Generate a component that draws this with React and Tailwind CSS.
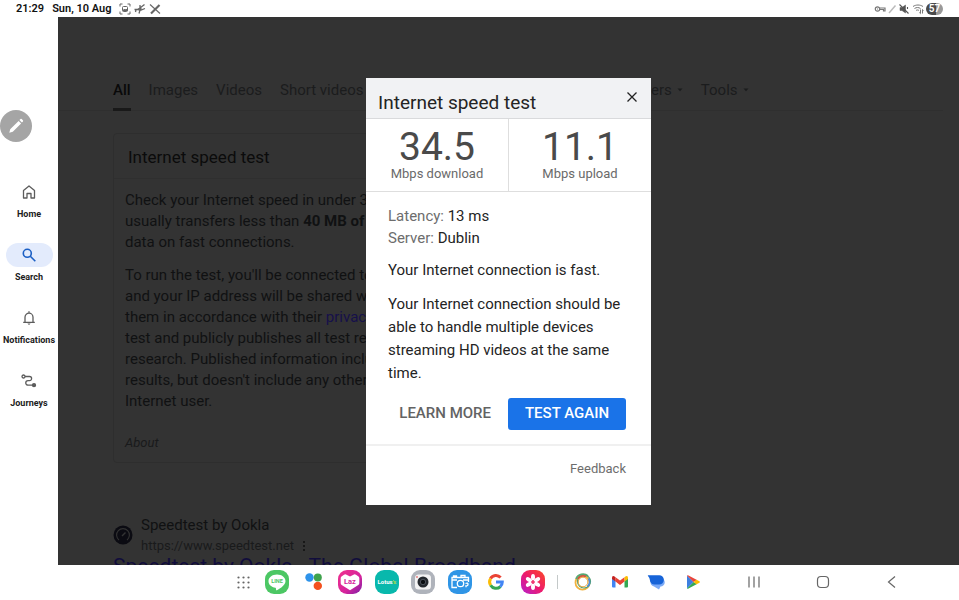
import React from "react";

const tabs = ["Images", "Videos", "Short videos", "Forums", "News", "Web", "Books"];

function Caret() {
  return (
    <svg viewBox="0 0 6 4" className="h-1 w-1.5" fill="currentColor">
      <path d="M0.5 0.5h5L3 3.2z" />
    </svg>
  );
}

function StatusBar() {
  return (
    <header className="flex h-[17px] shrink-0 items-center justify-between pr-4 pl-4 text-[11px] leading-4 font-semibold text-[#111]">
      <div className="flex items-center gap-2">
        <span>21:29</span>
        <span>Sun, 10 Aug</span>
        <div className="flex items-center gap-[3px] text-[#666]">
          <svg viewBox="0 0 12 12" className="h-3 w-3" fill="none" stroke="currentColor">
            <path d="M1 3.5V1h2.5M8.500 1H11v2.500M11 8.500V11H8.500M3.500 11H1V8.500" />
            <rect x="3.500" y="3.500" width="5" height="5" rx="1" />
            <path d="M4 7.500l1.500-1.500 1 1 1-1 1 1.500z" fill="currentColor" />
          </svg>
          <svg viewBox="0 0 12 12" className="h-3 w-3" fill="none" stroke="currentColor" strokeWidth="1.300">
            <path d="M0.500 6.500h3L6 5l4.500-3.500M3.500 6.500L7 7l4-1.500M6 5V2M6 7l-1 3.500M2 6.500l-.5 2.500" />
            <circle cx="6.500" cy="6" r="1.200" fill="currentColor" stroke="none" />
          </svg>
          <svg viewBox="0 0 12 12" className="h-3 w-3" fill="none" stroke="currentColor">
            <path d="M2 10.500L10.500 2" strokeWidth="2.200" />
            <path d="M1 1.500L11 10.500" strokeWidth="1.100" />
          </svg>
        </div>
      </div>
      <div className="flex items-center text-[#777]">
        <svg viewBox="0 0 12 12" className="h-3 w-3" fill="none" stroke="currentColor" strokeWidth="1.200">
          <circle cx="3.500" cy="6" r="2.200" />
          <path d="M5.500 5h5.500v3H9.500V6.500H5.500M3 6h1" />
        </svg>
        <svg viewBox="0 0 12 12" className="h-3 w-3" fill="none" stroke="#bbb" strokeWidth="1.500">
          <path d="M3 10L9.500 2.500" />
        </svg>
        <svg viewBox="0 0 12 12" className="h-3 w-3" fill="#555" stroke="#555">
          <path d="M2 4.500h2L7.500 2v8L4 7.500H2z" strokeWidth=".5" />
          <path d="M1.500 1.500l9 9M9.500 4v2" strokeWidth="1.100" fill="none" />
        </svg>
        <svg viewBox="0 0 12 12" className="ml-0.5 h-3 w-3" fill="none" stroke="currentColor">
          <path d="M1 3.500c3-2 7-2 10 0M2.500 5.500c2-1.300 4-1.300 6 0M4 7.500c1-.7 2-.7 3 0" />
          <path d="M8.500 10.500V6.500M7.300 9.500l1.200 1.200M10.500 6.500v4M10.500 6.500l1 1" />
        </svg>
        <span className="ml-0.5 w-[17px] rounded-full bg-linear-to-r from-[#4a4a4a] from-60% to-[#999] to-60% text-center text-[10px] leading-3 text-white">
          57
        </span>
      </div>
    </header>
  );
}

function NavItem({ label, active, children }) {
  return (
    <a href="#" className="flex flex-col items-center gap-0.5 text-[9px] leading-4 font-bold text-[#1c1c1c]">
      <span className={`flex h-6 w-[47px] items-center justify-center rounded-full ${active ? "bg-[#e3ebfc] text-[#1b5fc4]" : "text-[#5c5c5c]"}`}>
        {children}
      </span>
      {label}
    </a>
  );
}

function Sidebar() {
  return (
    <aside className="flex w-[58px] shrink-0 flex-col bg-white pt-[93px]">
      <button aria-label="Edit" className="flex h-8 w-8 items-center justify-center rounded-full bg-[#a5a5a5]">
        <svg viewBox="0 0 18 18" className="h-[18px] w-[18px]" fill="#fff">
          <path d="M2.300 15.700l.9-3.500L11.600 3.900l2.500 2.500-8.300 8.400zM12.400 3.100l1.100-1.100q.6-.4 1.200.1l1.200 1.200q.5.600.1 1.200l-1.100 1.100z" />
        </svg>
      </button>
      <nav className="flex flex-col gap-[21px] pt-[38px]">
        <NavItem label="Home">
          <svg viewBox="0 0 14 14" className="h-3.5 w-3.5" fill="none" stroke="currentColor" strokeWidth="1.300">
            <path d="M1.500 5.500L7 1l5.500 4.500v7.500H9V8.500H5V13H1.500z" strokeLinejoin="round" />
          </svg>
        </NavItem>
        <NavItem label="Search" active>
          <svg viewBox="0 0 14 14" className="h-3.5 w-3.5" fill="none" stroke="currentColor" strokeWidth="1.600">
            <circle cx="5.300" cy="5.300" r="4" />
            <path d="M8.300 8.300l5 5" />
          </svg>
        </NavItem>
        <NavItem label="Notifications">
          <svg viewBox="0 0 14 14" className="h-3.5 w-3.5" fill="none" stroke="currentColor" strokeWidth="1.300">
            <path d="M1.200 11.300h11.600M3 11V6.200a4 4 0 018 0V11M7 2.400V.3" />
            <path d="M5.400 12.400h3.200L7 14z" fill="currentColor" stroke="none" />
          </svg>
        </NavItem>
        <NavItem label="Journeys">
          <svg viewBox="0 0 16 14" className="h-3.5 w-4" fill="none" stroke="currentColor" strokeWidth="1.300">
            <circle cx="2.500" cy="2.500" r="1.500" />
            <path d="M4 2.500h4.500a2.100 2.100 0 010 4.200H7a2.250 2.250 0 000 4.500h5" />
            <circle cx="13" cy="11.200" r="1.500" fill="currentColor" />
          </svg>
        </NavItem>
      </nav>
    </aside>
  );
}

function Results() {
  return (
    <div className="pt-16 text-[#101112]">
      <nav className="mr-4 flex h-[30px] items-start gap-[18px] border-b border-[#2f2f2f] pl-[55px] text-[15px] leading-[18px] whitespace-nowrap text-[#1b1c1d]">
        <a href="#" className="h-[30px] border-b-3 border-[#191919] font-medium text-[#090909]">All</a>
        {tabs.map((t) => (
          <a href="#" key={t}>{t}</a>
        ))}
        <button className="flex items-center gap-[5px]">All filters <Caret /></button>
        <button className="flex items-center gap-[5px]">Tools <Caret /></button>
      </nav>
      <section className="mt-[22px] ml-[55px] w-[470px] rounded-sm border border-[#2e2e2e] whitespace-nowrap">
        <h2 className="border-b border-[#2f2f2f] px-3.5 pt-3 pb-2.5 text-[17px] leading-[22px] text-[#0b0b0b]">Internet speed test</h2>
        <div className="flex flex-col gap-3 px-[11px] pt-[11px] text-[15px] leading-[21px]">
          <p>
            Check your Internet speed in under 30 seconds. The speed test<br />
            usually transfers less than <b>40 MB of data</b>, but may transfer more<br />
            data on fast connections.
          </p>
          <p>
            To run the test, you'll be connected to Measurement Lab<br />
            and your IP address will be shared with them and used by<br />
            them in accordance with their <a href="#" className="text-[#16104a]">privacy policy</a>. M-Lab runs the<br />
            test and publicly publishes all test results to promote<br />
            research. Published information includes your IP and<br />
            results, but doesn't include any other details about an<br />
            Internet user.
          </p>
        </div>
        <p className="px-[11px] pt-[22px] pb-2.5 text-[13px] leading-[18px] text-[#191a1b] italic">About</p>
      </section>
      <section className="mt-[52px] pl-[55px]">
        <div className="flex items-center gap-2">
          <svg viewBox="0 0 20 20" className="h-5 w-5">
            <circle cx="10" cy="10" r="9.500" fill="#0b0b12" />
            <path d="M6 15a6.400 6.400 0 118 0" fill="none" stroke="#333" strokeWidth="1.100" />
            <path d="M9 11l3.500-3.500" stroke="#333" strokeWidth="1.400" />
          </svg>
          <div>
            <p className="text-[15px] leading-[21px]">Speedtest by Ookla</p>
            <p className="flex items-center gap-2 text-[13px] leading-[19px] text-[#191a1b]">
              https://www.speedtest.net
              <svg viewBox="0 0 4 12" className="h-3 w-1" fill="#111">
                <circle cx="2" cy="2" r="1" />
                <circle cx="2" cy="6" r="1" />
                <circle cx="2" cy="10" r="1" />
              </svg>
            </p>
          </div>
        </div>
        <a href="#" className="block text-[21px] leading-[22px] text-[#110d3c]">Speedtest by Ookla - The Global Broadband</a>
      </section>
    </div>
  );
}

function Figure({ value, unit }) {
  return (
    <div className="flex-1 pt-2.5 pb-[9px] text-center">
      <div className="text-[39px] leading-[37px] text-[#4a4a4a]">{value}</div>
      <div className="text-[13px] leading-4 text-[#6a6a6a]">{unit}</div>
    </div>
  );
}

function SpeedDialog() {
  return (
    <div role="dialog" aria-labelledby="speed-title" className="w-[285px] bg-white text-[15px] text-[#242424]">
      <div className="flex items-start justify-between border-b border-[#d9dadc] bg-[#f1f2f4] pt-[13px] pr-3.5 pb-[3px] pl-3">
        <h1 id="speed-title" className="text-[19px] leading-6">Internet speed test</h1>
        <button aria-label="Close" className="pt-px">
          <svg viewBox="0 0 10 10" className="h-2.5 w-2.5" fill="none" stroke="#222" strokeWidth="1.300">
            <path d="M.5.5l9 9M9.500.5l-9 9" />
          </svg>
        </button>
      </div>
      <div className="flex divide-x divide-[#dedede] border-b border-[#dedede]">
        <Figure value="34.5" unit="Mbps download" />
        <Figure value="11.1" unit="Mbps upload" />
      </div>
      <div className="px-[22px] pt-[13px] leading-[22px]">
        <p><span className="text-[#6d6d6d]">Latency:</span> 13 ms</p>
        <p><span className="text-[#6d6d6d]">Server:</span> Dublin</p>
        <p className="pt-2.5">Your Internet connection is fast.</p>
        <p className="pt-3 leading-[23px]">
          Your Internet connection should be able to handle multiple devices streaming HD videos at the same time.
        </p>
      </div>
      <div className="flex justify-end gap-[17px] border-b-2 border-[#f0f0f0] pt-[13px] pr-[25px] pb-3.5 font-medium">
        <button className="text-[#636363]">LEARN MORE</button>
        <button className="h-8 w-[118px] rounded-[3px] bg-[#1a73e8] text-white">TEST AGAIN</button>
      </div>
      <div className="pt-3.5 pr-[25px] pb-[27px] text-right text-[13px] leading-[18px] text-[#6d6d6d]">
        <a href="#">Feedback</a>
      </div>
    </div>
  );
}

function AppIcons() {
  return (
    <div className="ml-[15px] flex w-[280px] items-center justify-between">
      <svg viewBox="0 0 24 24" className="h-6 w-6">
        <rect width="24" height="24" rx="9" fill="#4cc764" />
        <path d="M12 4.500c-4.800 0-8.500 2.900-8.500 6.700 0 3.300 2.900 6 7 6.600.8.200.4 2.200.7 2.500 1 .2 9.300-4.700 9.300-9.100 0-3.800-3.700-6.700-8.500-6.700z" fill="#fff" />
        <text x="12" y="13.300" textAnchor="middle" fontSize="5.500" fontWeight="700" fill="#4cc764">LINE</text>
      </svg>
      <svg viewBox="0 0 24 24" className="h-6 w-6">
        <circle cx="7.500" cy="7.500" r="4.200" fill="#2e93ea" />
        <circle cx="15.800" cy="7.500" r="4" fill="#3fa34d" />
        <circle cx="15.800" cy="15.900" r="4.200" fill="#f4511e" />
      </svg>
      <svg viewBox="0 0 24 24" className="h-6 w-6">
        <defs>
          <linearGradient id="laz" x1="0" y1="0" x2="1" y2="1">
            <stop offset="0" stopColor="#f0308c" />
            <stop offset=".6" stopColor="#d6249c" />
            <stop offset="1" stopColor="#7a1fa8" />
          </linearGradient>
        </defs>
        <rect width="24" height="24" rx="9" fill="url(#laz)" />
        <path d="M12 6.500L16 4.500q1-.4 2 .3l2.500 1.700q.8.700.8 1.700v5q0 1.200-1 1.800L12 20.300 3.700 15q-1-.6-1-1.800v-5q0-1 .8-1.700L6 4.800q1-.7 2-.3z" fill="#fff" />
        <text x="12" y="14" textAnchor="middle" fontSize="7.500" fontWeight="700" fill="#d6249c">Laz</text>
      </svg>
      <svg viewBox="0 0 24 24" className="h-6 w-6">
        <rect width="24" height="24" rx="9" fill="#08b8ac" />
        <text x="12" y="14" textAnchor="middle" fontSize="6" fontWeight="700" fill="#fff">Lotus<tspan fill="#b4dc3c">'s</tspan></text>
      </svg>
      <svg viewBox="0 0 24 24" className="h-6 w-6">
        <rect width="24" height="24" rx="9" fill="#afb3bb" />
        <rect x="4" y="4.500" width="16" height="15" rx="3.500" fill="#f3f3f4" />
        <circle cx="12" cy="12" r="5.500" fill="#24282e" />
        <circle cx="12" cy="12" r="2.700" fill="#0b0e12" stroke="#596069" strokeWidth=".8" />
        <circle cx="6" cy="7" r=".8" fill="#d33" />
      </svg>
      <svg viewBox="0 0 24 24" className="h-6 w-6">
        <rect width="24" height="24" rx="9" fill="#2f95e6" />
        <g fill="none" stroke="#fff" strokeWidth="1.300">
          <path d="M20.500 12V7.500H4v10h5M4 10h5M15 10h5.500M5.500 7.500V6h3v1.500M13 7V5.500h4V7" />
          <circle cx="12.500" cy="13.500" r="3.200" fill="#2f95e6" />
          <path d="M17.500 13.500q2.500-1 2.500.7t-2 1.600v1.500" />
        </g>
      </svg>
      <svg viewBox="0 0 24 24" className="h-6 w-6" fill="none" strokeWidth="3">
        <path d="M6.500 8.600A6.300 6.300 0 0116.600 7.500" stroke="#ea4335" />
        <path d="M6.600 15.300a6.300 6.300 0 010-6.700" stroke="#fbbc05" />
        <path d="M16.400 16.600a6.300 6.300 0 01-9.800-1.400" stroke="#34a853" />
        <path d="M12 12h6.300a6.300 6.300 0 01-2.100 4.700" stroke="#4285f4" />
      </svg>
      <svg viewBox="0 0 24 24" className="h-6 w-6">
        <defs>
          <linearGradient id="gallery" x1="0" y1="1" x2="1" y2="0">
            <stop offset="0" stopColor="#b41fd0" />
            <stop offset=".5" stopColor="#ee1c6c" />
            <stop offset="1" stopColor="#fb4a25" />
          </linearGradient>
        </defs>
        <rect width="24" height="24" rx="9" fill="url(#gallery)" />
        <g fill="#fff">
          {[0, 60, 120, 180, 240, 300].map((a) => (
            <ellipse key={a} cx="12" cy="7.300" rx="2" ry="3.300" transform={`rotate(${a} 12 12)`} />
          ))}
        </g>
        <circle cx="12" cy="12" r="1.600" fill="#ee3c70" />
      </svg>
    </div>
  );
}

function Taskbar() {
  return (
    <footer className="flex h-[35px] shrink-0 items-center bg-white pb-px pl-[237px]">
      <button aria-label="All apps">
        <svg viewBox="0 0 13 13" className="h-[13px] w-[13px]" fill="#666">
          {[1.5, 6.5, 11.5].map((y) => [1.5, 6.5, 11.5].map((x) => <circle key={`${x}-${y}`} cx={x} cy={y} r="1.100" />))}
        </svg>
      </button>
      <AppIcons />
      <div className="ml-3 h-3.5 w-px bg-[#c4c9c9]" />
      <div className="ml-[15px] flex w-[130px] items-center justify-between">
        <svg viewBox="0 0 20 20" className="h-5 w-5" fill="none" strokeWidth="1.800">
          <circle cx="9.500" cy="10.700" r="7" stroke="#f0b23e" />
          <path d="M3 7a7.500 7.500 0 0112-3" stroke="#5aaa74" />
          <circle cx="11" cy="9.500" r="6.500" stroke="#4e9f70" strokeWidth="1.200" />
          <path d="M5 7a6 6 0 018-2.500" stroke="#d9533f" />
          <path d="M15.500 6.500a6.200 6.200 0 01-1 8" stroke="#4b8ae0" />
          <circle cx="10" cy="10" r="4.800" stroke="#e9a640" strokeWidth="1" />
        </svg>
        <svg viewBox="0 0 20 20" className="h-5 w-5">
          <path d="M2 6v8.500q0 1 1 1h2.500V8.500z" fill="#4285f4" />
          <path d="M18 6v8.500q0 1-1 1h-2.500V8.500z" fill="#34a853" />
          <path d="M5.500 5.200L10 8.600l4.500-3.400v4.400L10 13 5.500 9.600z" fill="#ea4335" />
          <path d="M14.500 5.200Q18 2.700 18 6v1l-3.500 2.600z" fill="#fbbc04" />
          <path d="M5.500 5.200Q2 2.700 2 6v1l3.500 2.600z" fill="#c5221f" />
        </svg>
        <svg viewBox="0 0 20 20" className="h-5 w-5">
          <path d="M9 6h5.500a4.200 4.200 0 010 8.500L13 17.500 8 14.500a4.300 4.300 0 011-8.500z" fill="#7baaf7" />
          <path d="M1.800 3.200h11.400a4.600 4.600 0 010 9.300H8.500a4.600 4.600 0 01-4.600-4.600Q3.800 6 2 4z" fill="#1764d8" />
        </svg>
        <svg viewBox="0 0 20 20" className="h-5 w-5">
          <path d="M4 3.500L10.500 10 4 16.500z" fill="#3d7fe0" />
          <path d="M4 3.500Q4.700 3 5.500 3.500L14 8l-3.500 2z" fill="#e8453c" />
          <path d="M4 16.500Q4.700 17 5.500 16.500L14 12l-3.500-2z" fill="#34a853" />
          <path d="M13.500 7.700l3 1.600q.8.700 0 1.400l-3 1.600L10.500 10z" fill="#fbbc04" />
        </svg>
      </div>
      <div className="ml-[44px] flex w-[152px] items-center justify-between text-[#666]">
        <button aria-label="Recent apps">
          <svg viewBox="0 0 14 14" className="h-3.5 w-3.5" stroke="currentColor" strokeWidth="1.200">
            <path d="M2 1.500v11M7 1.500v11M12 1.500v11" />
          </svg>
        </button>
        <button aria-label="Home">
          <svg viewBox="0 0 14 14" className="h-3.5 w-3.5" fill="none" stroke="currentColor" strokeWidth="1.200">
            <rect x="1.500" y="1.500" width="11" height="11" rx="3.500" />
          </svg>
        </button>
        <button aria-label="Back">
          <svg viewBox="0 0 14 14" className="h-3.5 w-3.5" fill="none" stroke="currentColor" strokeWidth="1.200">
            <path d="M10 1.500L3.500 7l6.500 5.500" />
          </svg>
        </button>
      </div>
    </footer>
  );
}

export default function App() {
  return (
    <div className="flex h-screen flex-col bg-white font-[Roboto,sans-serif]">
      <StatusBar />
      <div className="flex min-h-0 flex-1">
        <Sidebar />
        <main className="relative min-w-0 flex-1 overflow-hidden bg-[#333]">
          <Results />
          <div className="absolute inset-0 flex items-center justify-center">
            <SpeedDialog />
          </div>
        </main>
      </div>
      <Taskbar />
    </div>
  );
}
